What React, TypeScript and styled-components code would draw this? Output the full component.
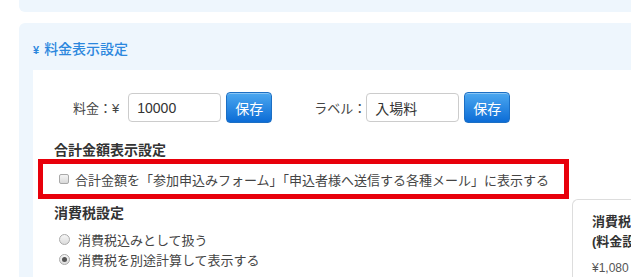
import styled, {createGlobalStyle} from 'styled-components';

const GlobalStyle = createGlobalStyle`
  html, body {
    margin: 0;
    padding: 0;
    background: #fff;
  }
  body {
    font-family: "Liberation Sans", "Noto Sans CJK JP", sans-serif;
    color: #333;
  }
`;

const Page = styled.div`
  width: 631px;
  height: 277px;
  overflow: hidden;
  padding-left: 19px;
  box-sizing: border-box;
`;

const TopPanel = styled.div`
  width: 640px;
  height: 12px;
  background: #eef6fd;
  border-radius: 0 0 6px 6px;
`;

const Section = styled.section`
  margin-top: 11px;
  width: 640px;
  background: #eef6fd;
  border-radius: 6px 6px 0 0;
  padding: 16px 0 0 14px;
  box-sizing: border-box;
`;

const SectionTitle = styled.h2`
  margin: 0;
  padding-bottom: 10px;
  font-size: 14px;
  line-height: 20px;
  font-weight: 500;
  color: #2b87dd;

  span {
    font-size: 11px;
    font-weight: bold;
    margin-right: 5px;
  }
`;

const Inner = styled.div`
  background: #fff;
  padding: 22px 0 0 21px;
  height: 260px;
  box-sizing: border-box;
`;

const FieldRow = styled.div`
  display: flex;
  align-items: center;
  padding-left: 19px;
  height: 31px;
`;

const Label = styled.span<{$gap?: number}>`
  font-size: 13px;
  color: #444;
  margin-left: ${({$gap}) => $gap || 0}px;
  white-space: nowrap;
`;

const TextInput = styled.input<{$gap: number}>`
  margin-left: ${({$gap}) => $gap}px;
  width: 93px;
  height: 29px;
  box-sizing: border-box;
  border: 1px solid #ccc;
  border-radius: 4px;
  padding: 0 8px;
  font-family: inherit;
  font-size: 14px;
  color: #333;
  outline: none;
`;

const SaveButton = styled.button`
  margin-left: 5px;
  width: 46px;
  height: 31px;
  border: 1px solid #1c6fc4;
  border-radius: 4px;
  background: linear-gradient(#4ca8f0, #0c6cd6);
  box-shadow: inset 0 1px 0 rgba(255, 255, 255, 0.35);
  color: #fff;
  font-family: inherit;
  font-size: 14px;
  padding: 0;
`;

const Heading = styled.h3<{$top: number}>`
  margin: ${({$top}) => $top}px 0 0;
  font-size: 14px;
  line-height: 17px;
  font-weight: bold;
  color: #333;
`;

const Highlight = styled.label`
  display: flex;
  align-items: center;
  margin-left: -16px;
  width: 531px;
  height: 40px;
  box-sizing: border-box;
  border: 5px solid #e8000b;
  padding-left: 16px;
  font-size: 13px;
  color: #444;
  white-space: nowrap;
`;

const Checkbox = styled.span`
  width: 10px;
  height: 10px;
  box-sizing: border-box;
  border: 1px solid #a9a9a9;
  border-radius: 2px;
  background: linear-gradient(#f4f4f4, #d9d9d9);
  margin-right: 6px;
  flex: none;
`;

const TaxRow = styled.div`
  display: flex;
  align-items: flex-start;
`;

const TaxColumn = styled.div`
  flex: 0 0 518px;
  padding-top: 6px;
`;

const RadioList = styled.div`
  margin-top: 7px;
`;

const RadioRow = styled.label`
  display: flex;
  align-items: center;
  height: 20px;
  padding-left: 5px;
  font-size: 13px;
  color: #444;
`;

const Radio = styled.span<{$checked?: boolean}>`
  position: relative;
  width: 11px;
  height: 11px;
  box-sizing: border-box;
  border: 1px solid #aaa;
  border-radius: 50%;
  background: linear-gradient(#f6f6f6, #dcdcdc);
  margin-right: 8px;
  flex: none;

  &::after {
    content: '';
    display: ${({$checked}) => ($checked ? 'block' : 'none')};
    position: absolute;
    left: 2px;
    top: 2px;
    width: 5px;
    height: 5px;
    border-radius: 50%;
    background: #555;
  }
`;

const ExampleCard = styled.div`
  width: 140px;
  height: 120px;
  box-sizing: border-box;
  border: 1px solid #ddd;
  border-right: none;
  border-radius: 6px 0 0 0;
  padding: 12px 0 0 19px;
  white-space: nowrap;
  overflow: hidden;
`;

const CardTitle = styled.div`
  font-size: 13px;
  line-height: 20px;
  font-weight: bold;
  color: #333;
`;

const CardPrice = styled.div`
  margin-top: 6px;
  font-size: 12px;
  line-height: 20px;
  color: #555;
`;

export default function App() {
  return (
    <Page>
      <GlobalStyle />
      <TopPanel />
      <Section>
        <SectionTitle>
          <span>¥</span>料金表示設定
        </SectionTitle>
        <Inner>
          <FieldRow>
            <Label>料金：¥</Label>
            <TextInput $gap={9} defaultValue="10000" />
            <SaveButton>保存</SaveButton>
            <Label $gap={42}>ラベル：</Label>
            <TextInput $gap={0} defaultValue="入場料" />
            <SaveButton>保存</SaveButton>
          </FieldRow>

          <Heading $top={19}>合計金額表示設定</Heading>
          <Highlight>
            <Checkbox />
            合計金額を「参加申込みフォーム」「申込者様へ送信する各種メール」に表示する
          </Highlight>

          <TaxRow>
            <TaxColumn>
              <Heading $top={0}>消費税設定</Heading>
              <RadioList>
                <RadioRow>
                  <Radio />
                  消費税込みとして扱う
                </RadioRow>
                <RadioRow>
                  <Radio $checked />
                  消費税を別途計算して表示する
                </RadioRow>
              </RadioList>
            </TaxColumn>
            <ExampleCard>
              <CardTitle>消費税の表示例</CardTitle>
              <CardTitle>(料金設定が¥1,000の場合)</CardTitle>
              <CardPrice>¥1,080</CardPrice>
            </ExampleCard>
          </TaxRow>
        </Inner>
      </Section>
    </Page>
  );
}
